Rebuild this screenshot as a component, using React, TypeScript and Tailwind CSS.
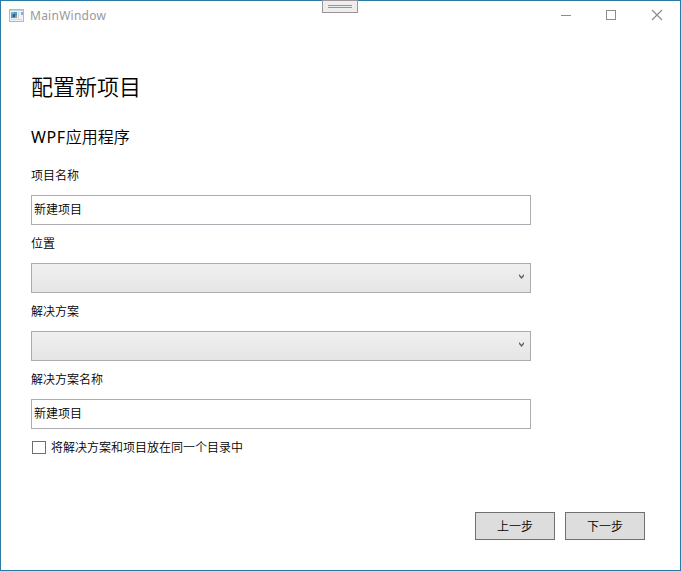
import React from 'react';

const Label = ({ children }: { children: React.ReactNode }) => (
  <div className="flex h-[38px] items-center text-[12px] leading-none">{children}</div>
);

const TextField = ({ value }: { value: string }) => (
  <div className="flex h-[30px] w-[500px] items-center border border-[#abadb3] bg-white pl-[2px] text-[12px] leading-none">{value}</div>
);

const Select = () => (
  <div className="flex h-[30px] w-[500px] items-center justify-end border border-[#acacac] bg-gradient-to-b from-[#f0f0f0] to-[#e5e5e5] pr-[6px]">
    <svg width="5" height="5" viewBox="0 0 5 5" className="mb-[3px]">
      <path d="M0 0 2.5 2.8 5 0V2L2.5 5 0 2Z" fill="#606060" />
    </svg>
  </div>
);

const Button = ({ children }: { children: React.ReactNode }) => (
  <button className="flex h-[28px] w-[80px] items-center justify-center border border-[#707070] bg-[#dddddd] pt-[2px] text-[12px] leading-none">{children}</button>
);

export default function App() {
  return (
    <div className="relative flex h-[571px] w-[681px] flex-col border border-[#2b7ba5] bg-white font-['Noto_Sans','Noto_Sans_CJK_SC',sans-serif] text-black">
      <header className="flex h-[29px] items-center justify-between">
        <div className="flex items-center gap-[6px] pl-[8px] text-[12px] tracking-[0.25px] text-[#999999]">
          <svg width="15" height="13" viewBox="0 0 15 13" shapeRendering="crispEdges">
            <path d="M.5 .5h14v12H.5z" fill="#eef2f7" stroke="#b4b8bf" />
            <path d="M1 1h13v1H1z" fill="#c9d0d8" />
            <path d="M2 3h6v6H2z" fill="#4a9cc4" />
            <path d="M2 3h3v2H2z" fill="#7fb0cb" />
            <path d="M4 5h2v3H4z" fill="#33617d" />
            <path d="M6 7h2v2H6z" fill="#a59a78" />
            <path d="M9 3h1v7H9z" fill="#d0d5dc" />
            <path d="M12 3h2v3h-2z" fill="#8faad0" />
            <path d="M2 10h11v1H2z" fill="#d5dae0" />
          </svg>
          <span>MainWindow</span>
        </div>
        <svg width="138" height="29" viewBox="0 0 138 29" fill="none" stroke="#8c8c8c">
          <path d="M19 14.5h10M64.5 9.5h9v9h-9z" shapeRendering="crispEdges" />
          <path d="m110 9 10 10m0-10-10 10" strokeWidth="1.2" />
        </svg>
      </header>
      <div className="absolute left-[321px] top-[-1px] flex h-[13px] w-[36px] flex-col items-center justify-center gap-px border border-[#9a9498] bg-[#eeeeee]">
        <div className="h-px w-[24px] bg-[#9a9498]" />
        <div className="h-px w-[24px] bg-[#9a9498]" />
      </div>
      <main className="flex grow flex-col pl-[30px] pt-[38px] font-[350]">
        <h1 className="h-[36px] text-[22px] font-[350] leading-[36px]">配置新项目</h1>
        <h2 className="mt-[18px] h-[30px] text-[16px] font-[350] leading-[30px]"><span className="font-normal tracking-[0.6px]">WPF</span>应用程序</h2>
        <div className="mt-[5px]">
          <Label>项目名称</Label>
          <TextField value="新建项目" />
          <Label>位置</Label>
          <Select />
          <Label>解决方案</Label>
          <Select />
          <Label>解决方案名称</Label>
          <TextField value="新建项目" />
        </div>
        <label className="mt-[10px] flex h-[17px] items-center gap-[5px] pl-[1px] text-[12px] leading-none">
          <span className="h-[13px] w-[14px] border border-[#707070]" />
          <span>将解决方案和项目放在同一个目录中</span>
        </label>
        <div className="mb-[30px] mr-[35px] mt-auto flex justify-end gap-[10px]">
          <Button>上一步</Button>
          <Button>下一步</Button>
        </div>
      </main>
    </div>
  );
}
